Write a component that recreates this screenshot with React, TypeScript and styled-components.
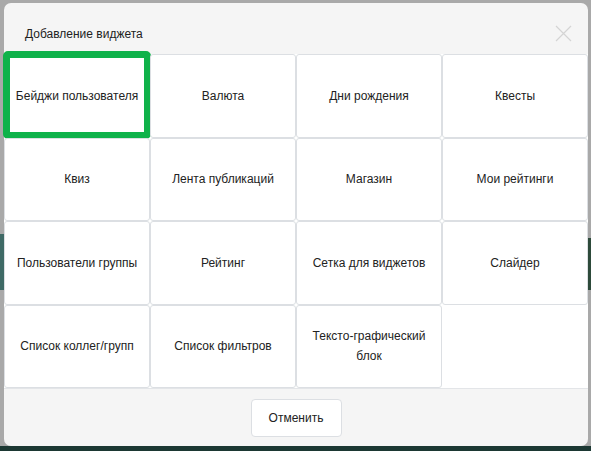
import React from 'react';
import styled, { createGlobalStyle } from 'styled-components';

const GlobalStyle = createGlobalStyle`
  html, body {
    margin: 0;
    padding: 0;
  }
  body {
    font-family: "Liberation Sans", "Open Sans", sans-serif;
    background: #a9a9a9;
  }
`;

const widgets = [
  'Бейджи пользователя',
  'Валюта',
  'Дни рождения',
  'Квесты',
  'Квиз',
  'Лента публикаций',
  'Магазин',
  'Мои рейтинги',
  'Пользователи группы',
  'Рейтинг',
  'Сетка для виджетов',
  'Слайдер',
  'Список коллег/групп',
  'Список фильтров',
  'Текстo-графический блок',
];

// Затемнённый фон под модалкой
const Backdrop = styled.div`
  box-sizing: border-box;
  width: 591px;
  height: 451px;
  padding: 3px 3px 5px 4px;
  background:
    linear-gradient(to bottom, transparent 446px, #1c3833 446px),
    linear-gradient(to bottom, transparent 234px, #3f6a66 234px, #3f6a66 290px, transparent 290px) left / 4px 100% no-repeat,
    linear-gradient(to bottom, transparent 238px, #2d4a3a 238px, #2d4a3a 290px, transparent 290px) right / 3px 100% no-repeat,
    #a9a9a9;
`;

const Modal = styled.div`
  width: 584px;
  height: 443px;
  display: flex;
  flex-direction: column;
  background: #f5f5f5;
  border-radius: 7px;
`;

const Header = styled.div`
  height: 51px;
  flex: none;
  display: flex;
  align-items: center;
  justify-content: space-between;
  padding: 10px 15px 0 21px;
  box-sizing: border-box;
  border-radius: 7px 7px 0 0;
`;

const Title = styled.h2`
  margin: 0;
  font-size: 12px;
  font-weight: 400;
  color: #222;
`;

const CloseButton = styled.button`
  width: 20px;
  height: 20px;
  padding: 0;
  border: none;
  background: none;
  display: flex;
  align-items: center;
  justify-content: center;
  cursor: pointer;
`;

const Grid = styled.div`
  flex: none;
  display: grid;
  grid-template-columns: repeat(4, 1fr);
  grid-auto-rows: 83.5px;
  background: #fff;
`;

const Cell = styled.button<{ $active?: boolean }>`
  position: relative;
  box-sizing: border-box;
  margin: 0;
  border: 1px solid #dcdfe3;
  border-radius: 3px;
  background: #fff;
  padding: 0 8px;
  font-family: inherit;
  font-size: 12px;
  line-height: 20px;
  color: #222;
  text-align: center;
  cursor: pointer;

  ${props => props.$active && `
    &::after {
      content: '';
      position: absolute;
      left: -2px;
      right: -2px;
      top: -4px;
      bottom: -2px;
      border: 7px solid #0fb24a;
      border-radius: 5px;
      pointer-events: none;
    }
  `}
`;

const Footer = styled.div`
  flex: 1;
  display: flex;
  align-items: center;
  justify-content: center;
  border-top: 1px solid #e3e5e8;
  border-radius: 0 0 7px 7px;
`;

const CancelButton = styled.button`
  width: 91px;
  height: 38px;
  border: 1px solid #dcdfe3;
  border-radius: 4px;
  background: #fff;
  font-family: inherit;
  font-size: 12px;
  color: #222;
  cursor: pointer;
`;

const App: React.FC = () => {
  return (
    <>
      <GlobalStyle />
      <Backdrop>
        <Modal>
          <Header>
            <Title>Добавление виджета</Title>
            <CloseButton aria-label="Закрыть">
              <svg width="17" height="17" viewBox="0 0 17 17">
                <path d="M1 1L16 16M16 1L1 16" stroke="#d4d4d4" strokeWidth="1.2" />
              </svg>
            </CloseButton>
          </Header>
          <Grid>
            {widgets.map((name, i) => (
              <Cell key={name} $active={i === 0}>
                {name}
              </Cell>
            ))}
          </Grid>
          <Footer>
            <CancelButton>Отменить</CancelButton>
          </Footer>
        </Modal>
      </Backdrop>
    </>
  );
};

export default App;
